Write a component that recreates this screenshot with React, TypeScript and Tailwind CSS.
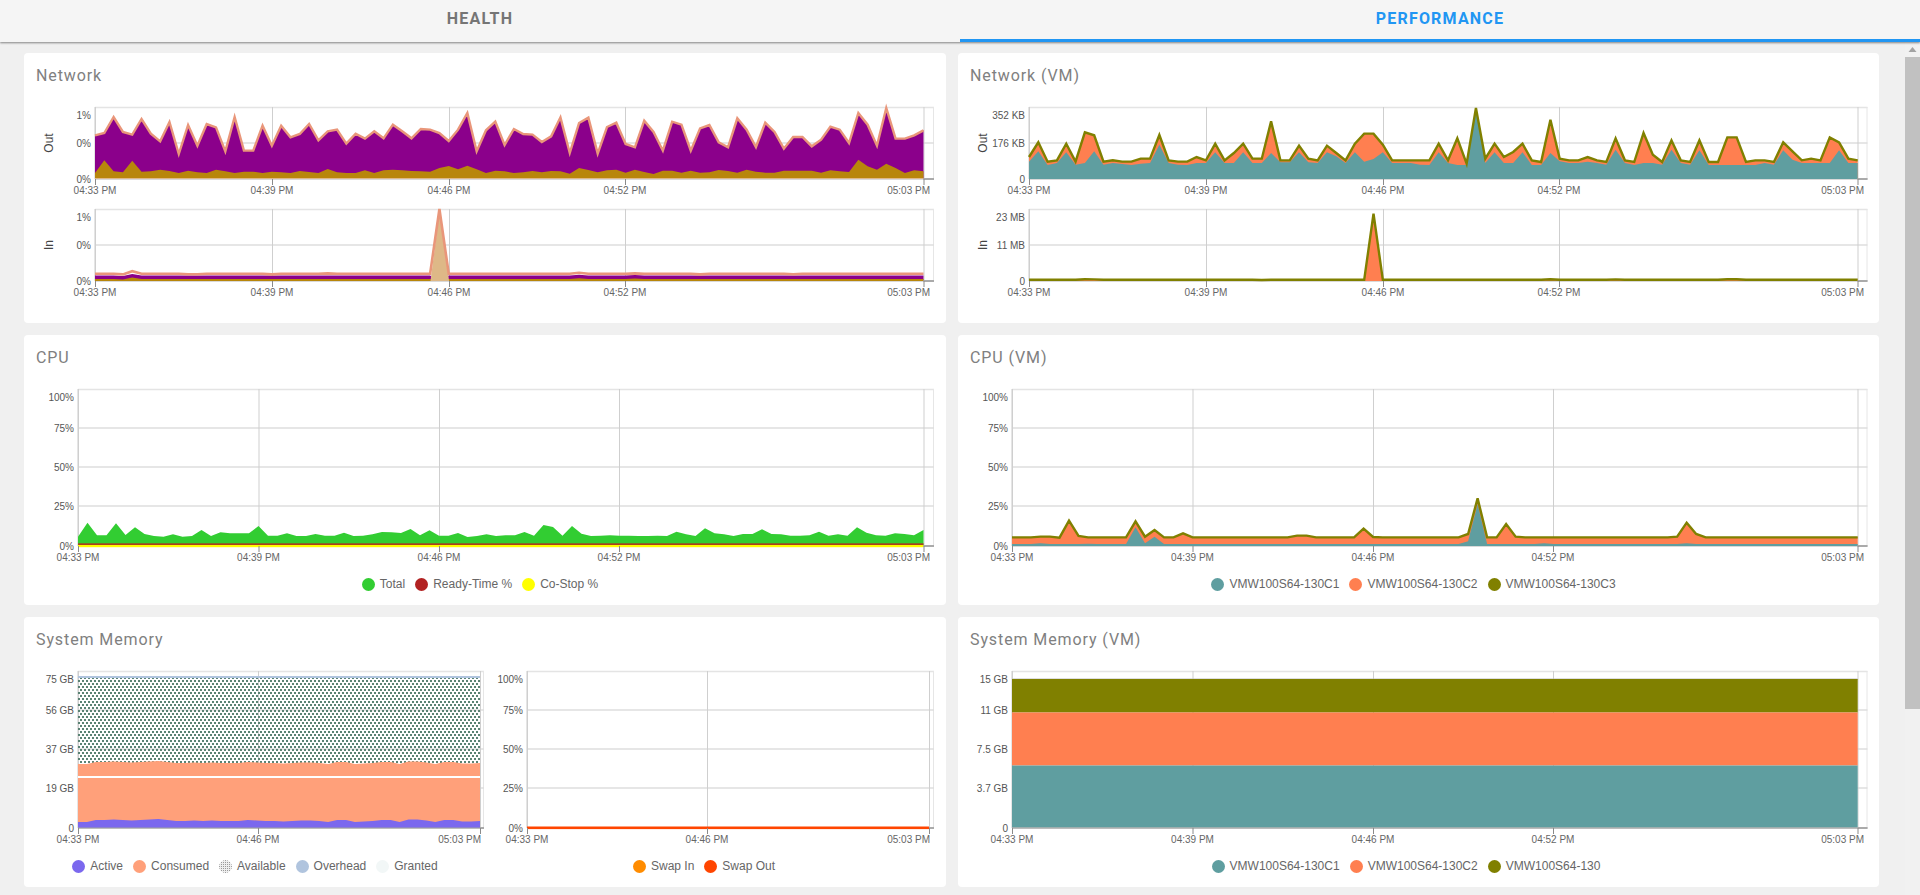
import type { ReactNode } from 'react'

// values below were read off the charts, in units of 1/3 px
const outPurple = [
  107, 100, 52, 97, 105, 58, 102, 125, 67, 163, 76, 138, 73, 83, 155, 52, 153, 153, 78, 138, 78, 113, 103, 73, 122, 95, 90, 132, 102, 117,
  95, 116, 75, 95, 116, 88, 90, 100, 124, 90, 40, 155, 92, 66, 136, 88, 103, 105, 127, 110, 53, 160, 70, 54, 162, 82, 69, 133, 143, 63,
  97, 153, 66, 75, 153, 86, 76, 128, 143, 56, 90, 142, 69, 97, 147, 112, 112, 140, 120, 81, 90, 130, 40, 75, 138, 25, 117, 117, 107, 92,
].map((z) => (z - 22) / 3)

const outGold = [
  220, 182, 215, 218, 183, 216, 215, 210, 214, 220, 213, 218, 220, 210, 215, 220, 216, 216, 220, 216, 218, 220, 214, 217, 220, 208, 218, 220, 220, 212,
  220, 212, 210, 212, 214, 215, 216, 205, 199, 209, 198, 209, 220, 213, 215, 220, 218, 214, 218, 214, 215, 222, 205, 211, 218, 212, 210, 219, 210, 217,
  223, 213, 213, 219, 213, 219, 218, 211, 214, 219, 210, 216, 219, 219, 213, 213, 213, 213, 219, 212, 215, 217, 180, 200, 210, 192, 205, 220, 212, 215,
].map((z) => (z - 22) / 3)

const vmOutOlive = [
  172, 128, 186, 182, 132, 186, 98, 107, 186, 182, 186, 186, 177, 177, 106, 182, 186, 186, 172, 182, 132, 182, 160, 132, 177, 177, 65, 182, 182, 138,
  177, 182, 138, 160, 182, 132, 102, 102, 135, 182, 182, 182, 182, 182, 132, 182, 116, 192, 25, 177, 132, 172, 157, 132, 182, 187, 60, 177, 182, 182,
  172, 182, 187, 116, 182, 187, 100, 165, 187, 122, 182, 187, 122, 187, 187, 113, 113, 187, 182, 182, 187, 128, 155, 182, 177, 182, 113, 128, 177, 182,
].map((z) => (z - 22) / 3)

const vmOutTeal = [
  186, 155, 196, 190, 158, 195, 190, 155, 195, 190, 193, 196, 192, 190, 135, 190, 195, 196, 190, 190, 158, 190, 190, 158, 190, 190, 160, 188, 188, 158,
  188, 190, 158, 170, 190, 158, 186, 178, 158, 190, 190, 190, 195, 196, 158, 190, 196, 196, 35, 190, 158, 190, 190, 158, 196, 196, 160, 185, 190, 190,
  186, 190, 195, 150, 190, 196, 190, 190, 195, 150, 190, 195, 152, 196, 196, 196, 196, 196, 196, 190, 195, 152, 180, 190, 190, 190, 190, 152, 190, 190,
].map((z) => (z - 22) / 3)

const cpuGreen = [
  200, 158, 196, 196, 160, 195, 172, 192, 198, 200, 193, 200, 198, 180, 198, 187, 190, 190, 190, 168, 197, 197, 190, 198, 198, 192, 197, 197, 188, 198,
  197, 193, 186, 187, 189, 177, 196, 181, 197, 197, 189, 201, 198, 193, 198, 196, 196, 186, 197, 165, 171, 197, 168, 191, 198, 197, 196, 197, 197, 198,
  198, 197, 198, 185, 193, 198, 175, 190, 193, 198, 192, 192, 178, 192, 193, 197, 197, 196, 185, 197, 193, 197, 172, 188, 196, 197, 190, 192, 196, 180,
].map((z) => z / 3 + 81)

const memActive = [
  151, 151, 149, 149, 148.5, 149, 149.5, 149, 148.5, 148, 149, 150, 150, 149.5, 150, 149.5, 150, 150, 150, 149, 149.5, 150, 150, 150.5, 150, 149.5, 149.5, 150, 151, 149,
  149, 151, 150.5, 150, 149, 149, 151, 148.5, 148.5, 149.5, 151, 149, 149, 150.5, 150.5, 150,
]

function series(n: number, base: number, overrides: Record<number, number>) {
  return Array.from({ length: n }, (_, i) => overrides[i] ?? base)
}

const inLine = series(90, 64.8, { 3: 65.4, 4: 62.2, 5: 64.8, 10: 65.2, 11: 65.2, 19: 65.4, 25: 64.4, 37: 0, 52: 63.8, 58: 64.4, 65: 65.4, 75: 65.3 })
const inPurple = series(90, 66.5, { 3: 67.1, 4: 64.9, 37: 72, 52: 65.7, 58: 65.9 })
const vmInLine = series(90, 70.8, { 6: 70.2, 7: 70.4, 25: 71, 37: 4.7, 56: 70.2, 63: 70.4, 75: 70.2, 76: 70.2 })

const cpuVmOlive = series(90, 622, {
  3: 620, 4: 620, 5: 623, 6: 572, 7: 618, 13: 574, 14: 620, 15: 600, 18: 610, 30: 617, 31: 617, 37: 596, 38: 621, 48: 612, 49: 505, 50: 622, 52: 582, 53: 620, 71: 578, 72: 612, 70: 620,
}).map((y) => y / 3 - 59)
const cpuVmTeal = series(90, 642, { 3: 640, 8: 641, 13: 592, 14: 640, 15: 620, 16: 642, 48: 634, 49: 522, 50: 642, 56: 640, 71: 640 }).map((y) => y / 3 - 59)

function pts(x0: number, x1: number, ys: number[]) {
  const step = (x1 - x0) / (ys.length - 1)
  return ys.map((y, i) => `${(x0 + i * step).toFixed(2)},${y.toFixed(2)}`).join(' ')
}

function Area({ x0, x1, ys, bottom, fill }: { x0: number; x1: number; ys: number[]; bottom: number; fill: string }) {
  return <polygon points={`${x0},${bottom} ${pts(x0, x1, ys)} ${x1},${bottom}`} fill={fill} />
}

function Line({ x0, x1, ys, stroke, width }: { x0: number; x1: number; ys: number[]; stroke: string; width: number }) {
  return <polyline points={pts(x0, x1, ys)} fill="none" stroke={stroke} strokeWidth={width} strokeLinejoin="miter" />
}

type Tick = { x: number; label: string; end?: number }

type ChartProps = {
  width: number
  h: number
  left: number
  dataEnd: number
  right: number
  yLabels: [number, string][]
  grid: number[]
  ticks: Tick[]
  axis?: string
  children: ReactNode
}

function Chart({ width, h, left, dataEnd, right, yLabels, grid, ticks, axis, children }: ChartProps) {
  return (
    <svg width={width} height={h + 18} className="block overflow-visible [font-family:'Liberation_Sans',Arial,sans-serif]">
      <line x1={left} x2={right} y1={0.5} y2={0.5} stroke="#e4e4e4" strokeWidth={1.5} />
      <line x1={right - 0.5} x2={right - 0.5} y1={0} y2={h} stroke="#e6e6e6" />
      <line x1={left} x2={left} y1={0} y2={h} stroke="#dcdcdc" strokeWidth={1.5} />
      {grid.map((y) => (
        <line key={y} x1={left} x2={right} y1={y} y2={y} stroke="#dedede" strokeWidth={1.5} />
      ))}
      {ticks.map((t) => (
        <line key={t.x} x1={t.x + 0.5} x2={t.x + 0.5} y1={0} y2={h} stroke="#cfcfcf" />
      ))}
      <line x1={left} x2={right} y1={h} y2={h} stroke="#b4b4b4" />
      {children}
      <line x1={dataEnd} x2={right} y1={h} y2={h} stroke="#aaaaaa" strokeWidth={2} />
      {ticks.map((t) => (
        <line key={t.x} x1={t.x + 0.5} x2={t.x + 0.5} y1={h} y2={h + 6} stroke="#8a8a8a" />
      ))}
      {yLabels.map(([y, label]) => (
        <text key={y} x={left - 4} y={y + 3.5} textAnchor="end" className="fill-[#555] text-[10px]">
          {label}
        </text>
      ))}
      {ticks.map((t) => (
        <text
          key={t.x}
          x={t.end ?? t.x}
          y={h + 14.5}
          textAnchor={t.end ? 'end' : 'middle'}
          className="fill-[#666] text-[10px]"
        >
          {t.label}
        </text>
      ))}
      {axis && (
        <text
          transform={`translate(29 ${h / 2}) rotate(-90)`}
          textAnchor="middle"
          className="fill-[#444] text-[12px]"
        >
          {axis}
        </text>
      )}
    </svg>
  )
}

function Dot({ color, dotted }: { color: string; dotted?: boolean }) {
  if (dotted) {
    return (
      <svg width={13} height={13} className="shrink-0">
        <defs>
          <pattern id="legend-dots" width={2} height={2} patternUnits="userSpaceOnUse">
            <rect width={2} height={2} fill="#eeeeee" />
            <rect width={1} height={1} fill="#9a9a9a" />
          </pattern>
        </defs>
        <circle cx={6.5} cy={6.5} r={6.5} fill="url(#legend-dots)" />
      </svg>
    )
  }
  return <svg width={13} height={13} className="shrink-0"><circle cx={6.5} cy={6.5} r={6.5} fill={color} /></svg>
}

type LegendItem = { label: string; color: string; dotted?: boolean }

function Legend({ items, className }: { items: LegendItem[]; className?: string }) {
  return (
    <div className={`mt-3 flex h-4 items-center justify-center [font-family:'Liberation_Sans',Arial,sans-serif] text-[12px] text-[#666] ${className ?? ''}`}>
      {items.map((it) => (
        <div key={it.label} className="mr-[10px] flex items-center gap-[5px]">
          <Dot color={it.color} dotted={it.dotted} />
          <span>{it.label}</span>
        </div>
      ))}
    </div>
  )
}

function Card({ title, children }: { title: string; children: ReactNode }) {
  return (
    <div className="h-[270px] rounded-[4px] bg-white">
      <div className="h-[54px] pl-3 pt-[13px] font-['Roboto',sans-serif] text-[16px] leading-5 tracking-[0.9px] text-[#808080]">
        {title}
      </div>
      {children}
    </div>
  )
}

const netTicks: Tick[] = [
  { x: 71, label: '04:33 PM' },
  { x: 248, label: '04:39 PM' },
  { x: 425, label: '04:46 PM' },
  { x: 601, label: '04:52 PM' },
  { x: 899.5, label: '05:03 PM', end: 906 },
]

const cpuTicks: Tick[] = [
  { x: 54, label: '04:33 PM' },
  { x: 234.5, label: '04:39 PM' },
  { x: 415, label: '04:46 PM' },
  { x: 595, label: '04:52 PM' },
  { x: 899.5, label: '05:03 PM', end: 906 },
]

const pctLabels: [number, string][] = [
  [8, '100%'],
  [39, '75%'],
  [78, '50%'],
  [117, '25%'],
  [157, '0%'],
]

const vmLegend = (last: string): LegendItem[] => [
  { label: 'VMW100S64-130C1', color: '#5f9ea0' },
  { label: 'VMW100S64-130C2', color: '#ff7f50' },
  { label: last, color: '#808000' },
]

export default function App() {
  return (
    <div className="flex h-[895px] w-[1920px] flex-col overflow-hidden bg-[#f0f0f0]">
      {/* Tabs */}
      <div className="relative z-10 flex h-[42px] shrink-0 bg-[#f5f5f5] font-['Roboto',sans-serif] text-[16px] font-bold tracking-[1.2px] shadow-[0_1px_2px_rgba(0,0,0,0.45)]">
        <div className="flex flex-1 items-center justify-center pb-[4px] text-[#757575]">HEALTH</div>
        <div className="flex flex-1 items-center justify-center border-b-[3px] border-[#2196f3] pb-px text-[#2196f3]">PERFORMANCE</div>
      </div>

      <div className="flex min-h-0 flex-1">
        <div className="flex-1 pl-6 pt-[11px]">
          <div className="grid grid-cols-[922px_921px] gap-3">
            <Card title="Network">
              <div className="flex flex-col gap-3">
                <Chart
                  width={922}
                  h={72}
                  left={71}
                  dataEnd={899.5}
                  right={910}
                  yLabels={[[8, '1%'], [36, '0%'], [72, '0%']]}
                  grid={[36]}
                  ticks={netTicks}
                  axis="Out"
                >
                  <Area x0={71} x1={899.5} ys={outPurple} bottom={72} fill="#8b008b" />
                  <Area x0={71} x1={899.5} ys={outGold} bottom={72} fill="#b8860b" />
                  <rect x={71} y={71} width={828.5} height={1} fill="#deb887" />
                  <Line x0={71} x1={899.5} ys={outPurple} stroke="#e9967a" width={2.4} />
                </Chart>
                <Chart
                  width={922}
                  h={72}
                  left={71}
                  dataEnd={899.5}
                  right={910}
                  yLabels={[[8, '1%'], [36, '0%'], [72, '0%']]}
                  grid={[36]}
                  ticks={netTicks}
                  axis="In"
                >
                  <Area x0={71} x1={899.5} ys={inPurple} bottom={72} fill="#8b008b" />
                  <Area x0={71} x1={899.5} ys={inPurple.map((y) => Math.min(72, y + 3.5))} bottom={72} fill="#b8860b" />
                  <polygon points="406.5,72 415.8,0 425.1,72" fill="#deb887" />
                  <Line x0={71} x1={899.5} ys={inLine} stroke="#e9967a" width={2.6} />
                </Chart>
              </div>
            </Card>

            <Card title="Network (VM)">
              <div className="flex flex-col gap-3">
                <Chart
                  width={921}
                  h={72}
                  left={71}
                  dataEnd={899.7}
                  right={909.5}
                  yLabels={[[8, '352 KB'], [36, '176 KB'], [72, '0']]}
                  grid={[36]}
                  ticks={netTicks}
                  axis="Out"
                >
                  <Area x0={71} x1={899.7} ys={vmOutOlive} bottom={72} fill="#ff7f50" />
                  <Area x0={71} x1={899.7} ys={vmOutTeal} bottom={72} fill="#5f9ea0" />
                  <Line x0={71} x1={899.7} ys={vmOutOlive} stroke="#808000" width={2.4} />
                </Chart>
                <Chart
                  width={921}
                  h={72}
                  left={71}
                  dataEnd={899.7}
                  right={909.5}
                  yLabels={[[8, '23 MB'], [36, '11 MB'], [72, '0']]}
                  grid={[36]}
                  ticks={netTicks}
                  axis="In"
                >
                  <Area x0={71} x1={899.7} ys={vmInLine} bottom={72} fill="#ff7f50" />
                  <Line x0={71} x1={899.7} ys={vmInLine} stroke="#808000" width={2.4} />
                </Chart>
              </div>
            </Card>

            <Card title="CPU">
              <Chart
                width={922}
                h={157}
                left={54}
                dataEnd={899.5}
                right={910}
                yLabels={pctLabels}
                grid={[39, 78, 117]}
                ticks={cpuTicks}
              >
                <Area x0={54} x1={899.5} ys={cpuGreen} bottom={157} fill="#32cd32" />
                <rect x={54} y={154.3} width={845.5} height={2} fill="#a8401e" />
                <rect x={54} y={156} width={845.5} height={2.2} fill="#ffff00" />
              </Chart>
              <Legend
                items={[
                  { label: 'Total', color: '#32cd32' },
                  { label: 'Ready-Time %', color: '#b22222' },
                  { label: 'Co-Stop %', color: '#ffff00' },
                ]}
              />
            </Card>

            <Card title="CPU (VM)">
              <Chart
                width={921}
                h={157}
                left={54}
                dataEnd={899.7}
                right={909.5}
                yLabels={pctLabels}
                grid={[39, 78, 117]}
                ticks={cpuTicks}
              >
                <Area x0={54} x1={899.7} ys={cpuVmOlive} bottom={157} fill="#ff7f50" />
                <Area x0={54} x1={899.7} ys={cpuVmTeal} bottom={157} fill="#5f9ea0" />
                <Line x0={54} x1={899.7} ys={cpuVmOlive} stroke="#808000" width={2.4} />
              </Chart>
              <Legend items={vmLegend('VMW100S64-130C3')} />
            </Card>

            <Card title="System Memory">
              <div className="flex">
                <div className="w-[472px]">
                  <Chart
                    width={472}
                    h={157}
                    left={54}
                    dataEnd={456}
                    right={460}
                    yLabels={[[8, '75 GB'], [39, '56 GB'], [78, '37 GB'], [117, '19 GB'], [157, '0']]}
                    grid={[39, 78, 117]}
                    ticks={[
                      { x: 54, label: '04:33 PM' },
                      { x: 234, label: '04:46 PM' },
                      { x: 456, label: '05:03 PM', end: 457 },
                    ]}
                  >
                    <defs>
                      <pattern id="available-dots" width={4} height={6} patternUnits="userSpaceOnUse">
                        <rect x={0} y={0} width={2} height={2} fill="#5a8374" />
                        <rect x={2} y={3} width={2} height={2} fill="#5a8374" />
                      </pattern>
                    </defs>
                    <rect x={54} y={5} width={402} height={2} fill="#b0c4de" />
                    <rect x={54} y={7} width={402} height={86} fill="url(#available-dots)" />
                    <Area x0={54} x1={456} ys={memActive.map((y) => y - 58)} bottom={157} fill="#ffa07a" />
                    <rect x={54} y={105} width={402} height={2} fill="#ffffff" />
                    <Area x0={54} x1={456} ys={memActive} bottom={157} fill="#7b68ee" />
                    <rect x={54} y={156.5} width={402} height={1} fill="#a0a0a0" />
                  </Chart>
                  <Legend
                    items={[
                      { label: 'Active', color: '#7b68ee' },
                      { label: 'Consumed', color: '#ffa07a' },
                      { label: 'Available', color: '#ccc', dotted: true },
                      { label: 'Overhead', color: '#b0c4de' },
                      { label: 'Granted', color: '#f2f7f7' },
                    ]}
                  />
                </div>
                <div className="w-[426px]">
                  <Chart
                    width={426}
                    h={157}
                    left={31}
                    dataEnd={433}
                    right={438}
                    yLabels={pctLabels}
                    grid={[39, 78, 117]}
                    ticks={[
                      { x: 31, label: '04:33 PM' },
                      { x: 211, label: '04:46 PM' },
                      { x: 433, label: '05:03 PM', end: 434 },
                    ]}
                  >
                    <rect x={31} y={155.5} width={402} height={2.6} fill="#ff4500" />
                  </Chart>
                  <Legend
                    items={[
                      { label: 'Swap In', color: '#ff8c00' },
                      { label: 'Swap Out', color: '#ff4500' },
                    ]}
                  />
                </div>
              </div>
            </Card>

            <Card title="System Memory (VM)">
              <Chart
                width={921}
                h={157}
                left={54}
                dataEnd={899.7}
                right={909.5}
                yLabels={[[8, '15 GB'], [39, '11 GB'], [78, '7.5 GB'], [117, '3.7 GB'], [157, '0']]}
                grid={[39, 78, 117]}
                ticks={cpuTicks}
              >
                <rect x={54} y={7.5} width={845.7} height={1} fill="#bdbdbd" />
                <rect x={54} y={8} width={845.7} height={33.5} fill="#808000" />
                <rect x={54} y={41.5} width={845.7} height={53} fill="#ff7f50" />
                <rect x={54} y={94.5} width={845.7} height={62} fill="#5f9ea0" />
                <rect x={54} y={156.5} width={845.7} height={1} fill="#a0a0a0" />
              </Chart>
              <Legend items={vmLegend('VMW100S64-130')} className="pr-[15px]" />
            </Card>
          </div>
        </div>

        {/* Scrollbar */}
        <div className="flex w-[15px] shrink-0 flex-col items-center bg-[#f1f1f1]">
          <svg width={15} height={15} className="shrink-0">
            <polygon points="7.5,5 11.5,10 3.5,10" fill="#a3a3a3" />
          </svg>
          <div className="h-[652px] w-full bg-[#c1c1c1]" />
        </div>
      </div>
    </div>
  )
}
